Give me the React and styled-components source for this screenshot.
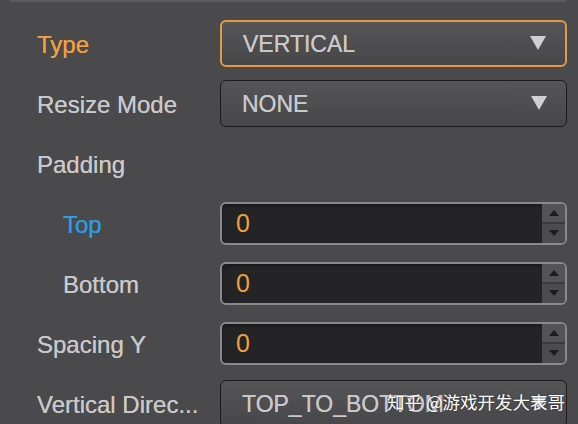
import styled, { createGlobalStyle } from 'styled-components'

const GlobalStyle = createGlobalStyle`
    html, body {
        margin: 0;
        padding: 0;
        background: #4a494b;
    }
    body {
        font-family: "Liberation Sans", Arial, sans-serif;
        overflow: hidden;
    }
`

const Panel = styled.div`
    position: relative;
    width: 578px;
    height: 424px;
    background: #4a494b;
    overflow: hidden;
`
const TopEdge = styled.div`
    height: 2px;
    margin: 0 12px 0 10px;
    background: #5c5b5d;
`
const Rows = styled.div`
    padding-top: 11px;
    display: flex;
    flex-direction: column;
`
const Row = styled.div`
    display: grid;
    grid-template-columns: 220px 347px;
    align-items: center;
    height: 60px;
`
const Label = styled.div`
    padding-left: ${props => props.indent ? '63px' : '37px'};
    padding-top: 3px;
    font-size: 24px;
    color: ${props => props.color || '#c9c8ca'};
    white-space: nowrap;
    overflow: hidden;
    text-shadow: 0 0 0.5px currentColor;
`
const Select = styled.div`
    box-sizing: border-box;
    height: 47px;
    display: flex;
    align-items: center;
    justify-content: space-between;
    padding: 2px 19px 0 21px;
    border-radius: 6px;
    border: ${props => props.focused ? '2px solid #e8983d' : '1.5px solid #1b1b1c'};
    background: linear-gradient(#555456, #474648);
    color: #c9c8ca;
    font-size: 23px;
    text-shadow: 0 0 0.5px currentColor;
`
const Caret = styled.span`
    width: 0;
    height: 0;
    border-left: 8px solid transparent;
    border-right: 8px solid transparent;
    border-top: 14px solid #cfcfd1;
    margin-top: -2px;
`
const NumberBox = styled.div`
    box-sizing: border-box;
    height: 43px;
    display: flex;
    border: 2px solid #8a898b;
    border-radius: 6px;
    overflow: hidden;
    background: #242326;
    box-shadow: inset 0 2px 3px rgba(0, 0, 0, 0.35);
`
const NumberValue = styled.div`
    flex: 1;
    display: flex;
    align-items: center;
    padding: 1px 0 0 14px;
    color: #f0a03e;
    font-size: 25px;
`
const Spinner = styled.div`
    width: 23px;
    display: flex;
    flex-direction: column;
    background: #4e4d50;
`
const SpinHalf = styled.div`
    flex: 1;
    display: flex;
    align-items: center;
    justify-content: center;
    background: ${props => props.up ? '#545356' : '#4c4b4e'};
    border-bottom: ${props => props.up ? '2px solid #3b3a3c' : 'none'};
`
const Arrow = styled.span`
    width: 0;
    height: 0;
    border-left: 5px solid transparent;
    border-right: 5px solid transparent;
    ${props => props.up
        ? 'border-bottom: 6px solid #1c1b1d;'
        : 'border-top: 6px solid #1c1b1d;'}
`
const Watermark = styled.div`
    position: absolute;
    left: 387px;
    top: 389px;
    font-family: "Noto Sans CJK SC", sans-serif;
    font-size: 17.5px;
    color: #ffffff;
    text-shadow: 0 0 2px rgba(0, 0, 0, 0.5);
    white-space: nowrap;
`

function SelectField({ value, focused }) {
    return (
        <Select focused={focused}>
            <span>{value}</span>
            <Caret />
        </Select>
    )
}

function NumberField({ value }) {
    return (
        <NumberBox>
            <NumberValue>{value}</NumberValue>
            <Spinner>
                <SpinHalf up><Arrow up /></SpinHalf>
                <SpinHalf><Arrow /></SpinHalf>
            </Spinner>
        </NumberBox>
    )
}

export default function App() {
    return (
        <>
            <GlobalStyle />
            <Panel>
                <TopEdge />
                <Rows>
                    <Row>
                        <Label color="#f0a03e">Type</Label>
                        <SelectField value="VERTICAL" focused />
                    </Row>
                    <Row>
                        <Label>Resize Mode</Label>
                        <SelectField value="NONE" />
                    </Row>
                    <Row>
                        <Label>Padding</Label>
                    </Row>
                    <Row>
                        <Label indent color="#2d9de6">Top</Label>
                        <NumberField value="0" />
                    </Row>
                    <Row>
                        <Label indent>Bottom</Label>
                        <NumberField value="0" />
                    </Row>
                    <Row>
                        <Label>Spacing Y</Label>
                        <NumberField value="0" />
                    </Row>
                    <Row>
                        <Label>Vertical Direc...</Label>
                        <SelectField value="TOP_TO_BOTTOM" />
                    </Row>
                </Rows>
                <Watermark>知乎 @游戏开发大表哥</Watermark>
            </Panel>
        </>
    )
}
